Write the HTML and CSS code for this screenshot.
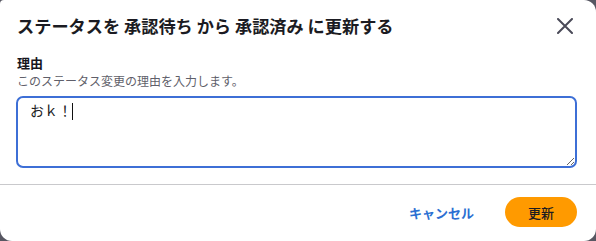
FILE: index.html
```html
<!DOCTYPE html>
<html lang="ja">
<head>
<meta charset="utf-8">
<link rel="stylesheet" href="styles.css">
</head>
<body>
<div class="dialog">
  <div class="header">
    <h1 class="title">ステータスを 承認待ち から 承認済み に更新する</h1>
    <button class="close" aria-label="閉じる">
      <svg width="16" height="16" viewBox="0 0 16 16"><path d="M1 1L15 15M15 1L1 15" stroke="#4a4a58" stroke-width="2" stroke-linecap="round"/></svg>
    </button>
  </div>
  <div class="body">
    <div class="label">理由</div>
    <div class="help">このステータス変更の理由を入力します。</div>
    <div class="field">
      <textarea class="input">おｋ！</textarea>
      <span class="caret"></span>
    </div>
  </div>
  <div class="divider"></div>
  <div class="footer">
    <button class="cancel">キャンセル</button>
    <button class="submit">更新</button>
  </div>
</div>
</body>
</html>
```
FILE: styles.css
```css
* { box-sizing: border-box; }
html, body { margin: 0; padding: 0; }
body {
  background: #575762;
  width: 596px;
  height: 241px;
  overflow: hidden;
  font-family: "Noto Sans CJK JP", "Noto Sans", sans-serif;
}
.dialog {
  width: 596px;
  height: 241px;
  background: #fff;
  border-radius: 4px 12px 12px 12px;
  display: flex;
  flex-direction: column;
}
.header {
  display: flex;
  align-items: center;
  justify-content: space-between;
  padding: 14px 23px 0 17px;
}
.title {
  margin: 0;
  font-size: 17.2px;
  line-height: 24px;
  font-weight: 700;
  color: #1b1b22;
}
.close {
  border: 0;
  background: none;
  padding: 0;
  width: 16px;
  height: 16px;
  display: flex;
}
.body {
  padding: 16px 19px 0 16px;
}
.label {
  font-size: 13px;
  line-height: 18px;
  font-weight: 700;
  color: #16161d;
  padding-left: 1px;
}
.help {
  font-size: 12px;
  line-height: 17px;
  color: #5f5f6a;
  padding-left: 1px;
}
.field {
  position: relative;
  margin-top: 7px;
}
.input {
  display: block;
  width: 561px;
  height: 72px;
  border: 2px solid #3d6fd6;
  border-radius: 7px;
  padding: 2px 12px;
  font-family: "Noto Sans CJK JP", sans-serif;
  font-size: 14px;
  line-height: 20px;
  color: #1b1b22;
  outline: none;
  caret-color: transparent;
  resize: vertical;
}
.caret {
  position: absolute;
  left: 56px;
  top: 7px;
  width: 1px;
  height: 17px;
  background: #111;
}
.divider {
  height: 1px;
  background: #c9c9cc;
  margin-top: 16px;
}
.footer {
  display: flex;
  justify-content: flex-end;
  align-items: center;
  gap: 31px;
  padding: 12px 19px 0 0;
}
.cancel {
  border: 0;
  background: none;
  padding: 0;
  font-family: inherit;
  font-size: 13px;
  font-weight: 700;
  color: #2b6fd2;
}
.submit {
  border: 0;
  background: #ff9a00;
  border-radius: 15px;
  width: 72px;
  height: 30px;
  font-family: inherit;
  font-size: 13px;
  font-weight: 500;
  color: #1b1b22;
}
```
